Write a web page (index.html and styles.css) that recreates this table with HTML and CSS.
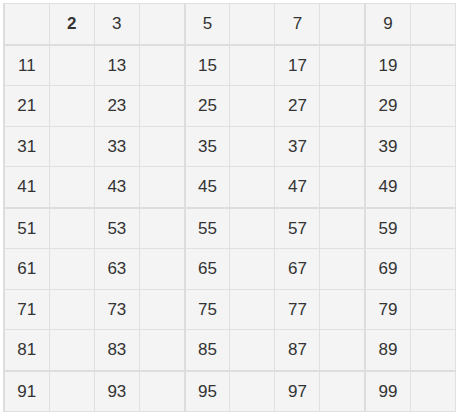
FILE: index.html
```html
<!DOCTYPE html>
<html>
<head>
<meta charset="utf-8">
<link rel="stylesheet" href="styles.css">
</head>
<body>
<table class="grid">
  <colgroup class="cg"><col><col><col><col></colgroup>
  <colgroup class="cg"><col><col><col><col></colgroup>
  <colgroup class="cg"><col><col></colgroup>
  <thead>
    <tr><td></td><th>2</th><td>3</td><td></td><td>5</td><td></td><td>7</td><td></td><td>9</td><td></td></tr>
  </thead>
  <tbody class="rg">
    <tr><td>11</td><td></td><td>13</td><td></td><td>15</td><td></td><td>17</td><td></td><td>19</td><td></td></tr>
    <tr><td>21</td><td></td><td>23</td><td></td><td>25</td><td></td><td>27</td><td></td><td>29</td><td></td></tr>
    <tr><td>31</td><td></td><td>33</td><td></td><td>35</td><td></td><td>37</td><td></td><td>39</td><td></td></tr>
    <tr><td>41</td><td></td><td>43</td><td></td><td>45</td><td></td><td>47</td><td></td><td>49</td><td></td></tr>
  </tbody>
  <tbody class="rg">
    <tr><td>51</td><td></td><td>53</td><td></td><td>55</td><td></td><td>57</td><td></td><td>59</td><td></td></tr>
    <tr><td>61</td><td></td><td>63</td><td></td><td>65</td><td></td><td>67</td><td></td><td>69</td><td></td></tr>
    <tr><td>71</td><td></td><td>73</td><td></td><td>75</td><td></td><td>77</td><td></td><td>79</td><td></td></tr>
    <tr><td>81</td><td></td><td>83</td><td></td><td>85</td><td></td><td>87</td><td></td><td>89</td><td></td></tr>
  </tbody>
  <tbody class="rg">
    <tr><td>91</td><td></td><td>93</td><td></td><td>95</td><td></td><td>97</td><td></td><td>99</td><td></td></tr>
  </tbody>
</table>
</body>
</html>
```
FILE: styles.css
```css
html, body {
  margin: 0;
  padding: 0;
  background: #ffffff;
}
body {
  padding: 3px 0 0 3px;
  font-family: "Liberation Sans", Arial, sans-serif;
  font-size: 17px;
  color: #333333;
}
.grid {
  border-collapse: collapse;
  width: 453px;
  table-layout: fixed;
  background: #f4f4f4;
  border: 1px solid #dddddd;
}
.grid td, .grid th {
  border: 1px solid #e0e0e0;
  height: 38.5px;
  padding: 1px 0 0 0;
  text-align: center;
  vertical-align: middle;
  font-weight: normal;
}
.grid th {
  font-weight: bold;
}
.grid .cg {
  border-left: 2px solid #dddddd;
}
.grid .rg {
  border-top: 2px solid #dddddd;
}
```
